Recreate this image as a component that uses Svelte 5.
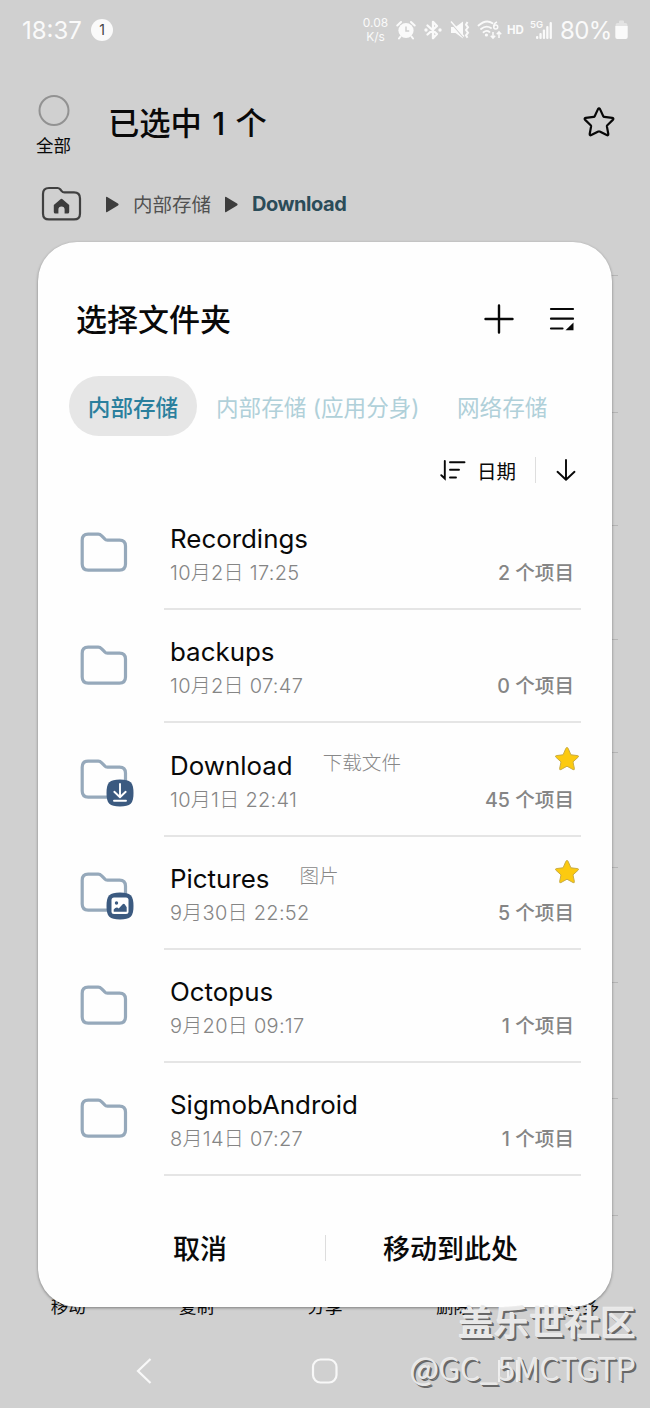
<script>
  const folders = [
    { name: 'Recordings', date: '10月2日 17:25', count: '2' },
    { name: 'backups', date: '10月2日 07:47', count: '0' },
    { name: 'Download', note: '下载文件', date: '10月1日 22:41', count: '45', badge: 'download', starred: true },
    { name: 'Pictures', note: '图片', date: '9月30日 22:52', count: '5', badge: 'image', starred: true },
    { name: 'Octopus', date: '9月20日 09:17', count: '1' },
    { name: 'SigmobAndroid', date: '8月14日 07:27', count: '1' }
  ];
  const tools = ['移动', '复制', '分享', '删除', '更多'];
  const lines = [275, 412, 525, 639, 752, 867, 982, 1098, 1215];
</script>

<div class="screen">
  <header class="status">
    <span class="time">18:37</span>
    <span class="notice">1</span>
    <div class="indicators">
      <span class="speed"><span>0.08</span><span>K/s</span></span>
      <svg class="alarm" width="20" height="20" viewBox="0 0 20 20">
        <circle cx="10" cy="10.5" r="7.6" fill="#fafafa" />
        <path d="M1.3 5.5 5 2M18.7 5.5 15 2M4.5 16.5 3 18.5M15.5 16.5 17 18.5" stroke="#fafafa" stroke-width="2" stroke-linecap="round" />
        <path d="M10 6.5v4.5h3.2" fill="none" stroke="#d0d0d0" stroke-width="1.5" />
      </svg>
      <svg class="bluetooth" width="18" height="20" viewBox="0 0 18 20">
        <path d="M3.5 5.5 13 14 9 18.2V1.8L13 6 3.5 14.5" fill="none" stroke="#fafafa" stroke-width="2.3" stroke-linejoin="round" stroke-linecap="round" />
        <circle cx="2" cy="10" r="1.7" fill="#fafafa" /><circle cx="16" cy="10" r="1.7" fill="#fafafa" />
      </svg>
      <svg class="mute" width="20" height="20" viewBox="0 0 20 20">
        <path d="M1 7h4.500L13 1.500v17L5.500 13H1z" fill="#fafafa" />
        <path d="M1 3 14 18" stroke="#d0d0d0" stroke-width="1.200" />
        <path d="m1 1.500 13 15" stroke="#fafafa" stroke-width="1.400" />
        <path d="m17.500 2-1.500 2.600 2 2.700-2 2.700 2 2.700-2 2.700 1.500 2.300" fill="none" stroke="#fafafa" stroke-width="2" />
      </svg>
      <svg class="wifi" width="26" height="20" viewBox="0 0 26 20">
        <path d="M1.500 5.500Q9-1.200 15.500 3.200M4 9q5-4.300 10-1M6.500 12.200q3-2.400 6-.3" fill="none" stroke="#fafafa" stroke-width="1.800" stroke-linecap="round" />
        <circle cx="9.400" cy="15" r="1.600" fill="#fafafa" />
        <path d="M20 2q-3.600 1.500-3.200 5.300M16 12v6M13.800 15.700 16 18.200l2.200-2.500M22 18v-6M19.800 14.300 22 11.800l2.200 2.500" fill="none" stroke="#fafafa" stroke-width="1.500" />
        <circle cx="18.700" cy="7" r="2" fill="none" stroke="#fafafa" stroke-width="1.500" />
      </svg>
      <span class="hd">HD</span>
      <span class="five">5G</span>
      <svg class="signal" width="17" height="19" viewBox="0 0 17 19" fill="#fafafa">
        <rect x="0" y="15" width="2.300" height="3" rx="1" /><rect x="3.400" y="12" width="2.300" height="6" rx="1" /><rect x="6.800" y="8.500" width="2.300" height="9.500" rx="1" /><rect x="10.200" y="5" width="2.300" height="13" rx="1" /><rect x="13.600" y="1" width="2.300" height="17" rx="1" />
      </svg>
      <span class="percent">80%</span>
      <svg class="battery" width="13" height="20" viewBox="0 0 13 20">
        <path d="M4 3V1.500q0-1 1-1h3q1 0 1 1V3h1.500Q12.500 3 12.500 6H.5Q.5 3 2.500 3z" fill="#e3e3e3" />
        <path d="M.3 6h12.400v11q0 2-2 2H2.300q-2 0-2-2z" fill="#fafafa" />
      </svg>
    </div>
  </header>

  <section class="selection">
    <div class="all"><i></i><span>全部</span></div>
    <h1>已选中 1 个</h1>
    <svg class="favorite" width="32" height="32" viewBox="0 0 32 32">
      <path d="M15 3.100Q16 1.500 17 3.100L20.300 10.200Q20.600 10.800 21.300 10.900L29.200 11.900Q31.200 12.400 29.800 13.900L24.300 19.200Q23.800 19.700 23.900 20.400L25.300 28Q25.400 29.800 23.700 29.100L16.700 25.600Q16 25.200 15.300 25.600L8.300 29.100Q6.600 29.800 6.700 28L8.100 20.400Q8.200 19.700 7.700 19.200L2.200 13.900Q.8 12.400 2.800 11.900L10.700 10.900Q11.400 10.800 11.700 10.200Z" fill="none" stroke="#080808" stroke-width="2.200" stroke-linejoin="round" />
    </svg>
  </section>

  <nav class="crumbs">
    <svg width="42" height="36" viewBox="0 0 42 36">
      <path d="M2 8Q2 2 8 2h8.500q1.600 0 2.700 1.200l1.500 1.900q1 1.300 2.700 1.300H33q6 0 6 6v15q0 6-6 6H8q-6 0-6-6z" fill="none" stroke="#404040" stroke-width="2.200" />
      <path d="m12.800 19 6.400-5.600q1.300-1.100 2.600 0L28.200 19v7q0 1.600-1.600 1.600h-3v-4q0-3.100-3.100-3.100t-3.100 3.100v4h-3q-1.600 0-1.600-1.600z" fill="#3c3c3c" />
    </svg>
    <svg class="chevron" width="14" height="17" viewBox="0 0 14 17"><path d="M1 1.700Q1 .3 2.200 1.100L13 7.600q1.200.9 0 1.800L2.200 15.900Q1 16.700 1 15.300z" fill="#3d3d3d" /></svg>
    <span class="crumb">内部存储</span>
    <svg class="chevron second" width="14" height="17" viewBox="0 0 14 17"><path d="M1 1.700Q1 .3 2.200 1.100L13 7.600q1.200.9 0 1.800L2.200 15.900Q1 16.700 1 15.300z" fill="#3d3d3d" /></svg>
    <strong>Download</strong>
  </nav>

  {#each lines as y}
    <div class="backline" style:top="{y}px"></div>
  {/each}
  <div class="tools">
    {#each tools as tool}<span>{tool}</span>{/each}
  </div>
  <div class="system">
    <svg width="18" height="28" viewBox="0 0 18 28"><path d="M15.500 2 3 14l12.500 12" fill="none" stroke="#f8f8f8" stroke-width="2.200" /></svg>
    <svg width="28" height="28" viewBox="0 0 28 28"><rect x="2" y="2.500" width="23.500" height="23" rx="7.500" fill="none" stroke="#f8f8f8" stroke-width="2.200" /></svg>
    <svg width="24" height="28" viewBox="0 0 24 28"><path d="M2 3v22M11 3v22M20 3v22" stroke="#efefef" stroke-width="2" /></svg>
  </div>

  <main class="dialog">
    <div class="heading">
      <h2>选择文件夹</h2>
      <svg width="30" height="30" viewBox="0 0 30 30"><path d="M15 1.500v27M1.500 15h27" stroke="#080808" stroke-width="2.400" stroke-linecap="round" /></svg>
      <svg class="menu" width="26" height="26" viewBox="0 0 26 26"><path d="M2 3h22M2 12.700h22M2 22.500h11.500" stroke="#080808" stroke-width="2.200" stroke-linecap="round" /><path d="M24.500 16.500v7.700h-8z" fill="#080808" /></svg>
    </div>
    <div class="tabs">
      <span class="tab active">内部存储</span>
      <span class="tab clone">内部存储 (应用分身)</span>
      <span class="tab">网络存储</span>
    </div>
    <div class="sort">
      <svg width="26" height="22" viewBox="0 0 26 22"><path d="M4.800 2v17.500L1.300 16.200M10 3.200h14.500M10 10.800h9M10 18.500h6" fill="none" stroke="#080808" stroke-width="1.900" stroke-linecap="round" /></svg>
      <span>日期</span>
      <i></i>
      <svg width="20" height="24" viewBox="0 0 20 24"><path d="M10 2v19.500M1.500 13.800l8.500 8 8.500-8" fill="none" stroke="#080808" stroke-width="1.900" stroke-linecap="round" stroke-linejoin="round" /></svg>
    </div>
    <ul>
      {#each folders as folder}
        <li>
          <div class="icon">
            <svg width="48" height="42" viewBox="0 0 48 42"><path d="M2.200 8.200Q2.200 2.200 8.200 2.200h10q2 0 3.300 1.500l3 3q1.200 1.400 3 1.400H39.500q6 0 6 6v18q0 6-6 6H8.200q-6 0-6-6z" fill="none" stroke="#96a9bb" stroke-width="3.200" /></svg>
            {#if folder.badge}
              <svg class="badge" width="28" height="28" viewBox="0 0 28 28">
                <path d="M14 .500C24.500.500 27.500 3.500 27.500 14S24.500 27.500 14 27.500.500 24.500.500 14 3.500.500 14 .500z" fill="#3b5a80" />
                {#if folder.badge === 'download'}
                  <path d="M14 5v13M8.300 12.800l5.700 5.500 5.700-5.500M8 21.700h12" fill="none" stroke="white" stroke-width="1.900" stroke-linecap="round" stroke-linejoin="round" />
                {:else}
                  <rect x="5.500" y="5.500" width="17" height="16.500" rx="2.500" fill="white" />
                  <circle cx="10.500" cy="11" r="1.700" fill="#3b5a80" />
                  <path d="M7.700 17.500q2.800-3.600 5-1l4-4.200q1-.9 2 0l2 3v4.500h-13z" fill="#3b5a80" />
                {/if}
              </svg>
            {/if}
          </div>
          <div class="body">
            <div class="top">
              <span class="name">{folder.name}</span>
              {#if folder.note}<span class="note">{folder.note}</span>{/if}
              {#if folder.starred}
                <svg class="star" width="26" height="26" viewBox="0 0 26 26"><path d="M13 1.500q.8 0 1.200 1l2.700 6.300 6.800.8q1.500.4.400 1.600L19 15.900l1.400 6.800q.1 1.500-1.300.9L13 20.200l-6.100 3.400q-1.400.6-1.300-.9L7 15.900l-5.100-4.700q-1.100-1.200.4-1.600l6.800-.8 2.700-6.300q.4-1 1.200-1z" fill="#fcca10" stroke="#c9ac45" stroke-width="1" /></svg>
              {/if}
            </div>
            <div class="bottom"><span>{folder.date}</span><b>{folder.count} 个项目</b></div>
          </div>
        </li>
      {/each}
    </ul>
    <footer>
      <button class="cancel">取消</button><i></i><button class="move">移动到此处</button>
    </footer>
  </main>

  <div class="watermark"><span class="community">盖乐世社区</span><span class="user">@GC_5MCTGTP</span></div>
</div>

<style>
  :global(body) { margin: 0; }
  .screen { position: relative; box-sizing: border-box; width: 650px; height: 1408px; overflow: hidden; background: #d0d0d0; color: #090909; font-family: Inter, "Noto Sans CJK SC", sans-serif; }
  .screen :is(span, h1, h2, strong, b, button) { white-space: nowrap; }
  svg { display: block; flex: none; }
  h1, h2, ul { margin: 0; padding: 0; }

  .status { display: flex; align-items: center; height: 60px; padding-left: 22px; color: #fafafa; }
  .time { width: 61px; font-size: 24px; }
  .notice { width: 22px; height: 22px; margin-left: 8px; border-radius: 50%; background: #fafafa; color: #444; font-size: 14px; line-height: 22px; text-align: center; }
  .indicators { display: flex; align-items: center; margin-left: auto; width: 288px; }
  .speed { display: flex; flex-direction: column; align-items: center; width: 27px; font-size: 12px; line-height: 14px; }
  .alarm { margin-left: 7px; }
  .bluetooth { margin-left: 8px; }
  .mute { margin-left: 8px; }
  .wifi { margin-left: 7px; }
  .hd { width: 17px; margin-left: 4px; font-size: 11.5px; font-weight: 700; }
  .five { width: 14px; margin: -11px 0 0 6px; font-size: 9.5px; font-weight: 600; }
  .signal { margin-left: -8px; }
  .percent { width: 52px; margin-left: 7px; font-size: 24px; letter-spacing: -.6px; }
  .battery { margin-left: 3px; }

  .selection { display: flex; height: 120px; }
  .all { display: flex; flex-direction: column; align-items: center; width: 108px; font-size: 17.5px; line-height: 24px; }
  .all i { box-sizing: border-box; width: 31px; height: 31px; margin: 35px 0 8px; border: 2px solid #929292; border-radius: 50%; }
  .all i, .all span { transform: translateX(-.5px); }
  h1 { width: 475px; padding-top: 44px; font-size: 31.3px; line-height: 40px; font-weight: 500; word-spacing: 2px; }
  .favorite { margin-top: 46px; }

  .crumbs { display: flex; align-items: center; height: 48px; padding-left: 41px; }
  .chevron { margin-left: 22px; }
  .crumb { width: 78px; margin-left: 14px; color: #505050; font-size: 19.5px; line-height: 28px; padding-top: 2px; }
  .second { margin-left: 13px; }
  .crumbs strong { margin-left: 14px; color: #2b4c59; font-size: 20px; font-weight: 700; letter-spacing: -.45px; }

  .backline { position: absolute; right: 32px; width: 10px; height: 1px; background: #b5b5b5; }
  .tools { position: absolute; left: 4px; right: 4px; top: 1295px; display: grid; grid-template-columns: repeat(5, 1fr); text-align: center; font-size: 17.5px; line-height: 24px; }
  .system { position: absolute; left: 135px; right: 129px; top: 1357px; display: flex; justify-content: space-between; }

  .dialog { position: absolute; box-sizing: border-box; left: 38px; top: 242px; width: 574px; height: 1065px; border-radius: 39px; background: #fefefe; box-shadow: 0 1px 3px #0006; }
  .heading { display: flex; align-items: center; height: 134px; padding: 19px 37px 0 38px; box-sizing: border-box; }
  h2 { flex: 1; padding-top: 3px; font-size: 31px; line-height: 40px; font-weight: 500; }
  .menu { margin-left: 35px; }
  .tabs { display: flex; height: 60px; padding-left: 31px; color: #b0d0d9; font-size: 22.6px; line-height: 64px; }
  .tab.active { box-sizing: border-box; width: 128px; height: 60px; border-radius: 30px; background: #e6e6e6; color: #2a7f9d; font-weight: 500; text-align: center; }
  .clone { width: 202px; margin: 0 39px 0 19px; }
  .sort { display: flex; align-items: center; justify-content: flex-end; height: 68px; padding-right: 36px; font-size: 19.5px; }
  .sort span { margin-left: 11px; }
  .sort i { width: 1px; height: 26px; margin: 0 20px 0 19px; background: #dedede; }
  ul { list-style: none; }
  li { display: flex; height: 113.3px; }
  .icon { position: relative; width: 126px; box-sizing: border-box; padding: 28px 0 0 42px; }
  .badge { position: absolute; left: 68px; top: 48px; }
  .body { width: 417px; box-sizing: border-box; border-bottom: 2px solid #e5e5e5; height: 106px; padding: 17px 7px 0 6px; }
  .top { display: flex; height: 35px; }
  .name { font-size: 25.9px; line-height: 35px; }
  .note { margin-left: 30px; color: #888; font-size: 19.6px; line-height: 30px; font-weight: 300; }
  .star { margin: -2px -6px 0 auto; }
  .bottom { display: flex; justify-content: space-between; color: #858585; font-size: 19.6px; line-height: 34px; }
  .bottom span { font-size: 20px; font-weight: 300; letter-spacing: .28px; }
  .bottom b { font-weight: 500; }
  footer { display: flex; align-items: center; height: 88px; padding-top: 20px; }
  footer i { width: 1px; height: 26px; background: #ddd; }
  button { border: 0; padding: 4px 0 0; background: none; color: #090909; font: 500 27px/40px Inter, "Noto Sans CJK SC", sans-serif; }
  .cancel { width: 287px; padding-left: 37px; }
  .move { flex: 1; padding-right: 37px; }
  .watermark { position: absolute; right: 14px; top: 1298px; display: flex; flex-direction: column; align-items: flex-end; color: #e8e8e8; font-family: "Noto Sans CJK SC", sans-serif; text-shadow: -1px -1px 0 #ececec, 1px 1px 0 #686868, 2px 2px 0 #686868; }
  .community { font-size: 35.5px; line-height: 46px; font-weight: 500; }
  .user { font-size: 31.8px; line-height: 46px; font-weight: 300; }
</style>
